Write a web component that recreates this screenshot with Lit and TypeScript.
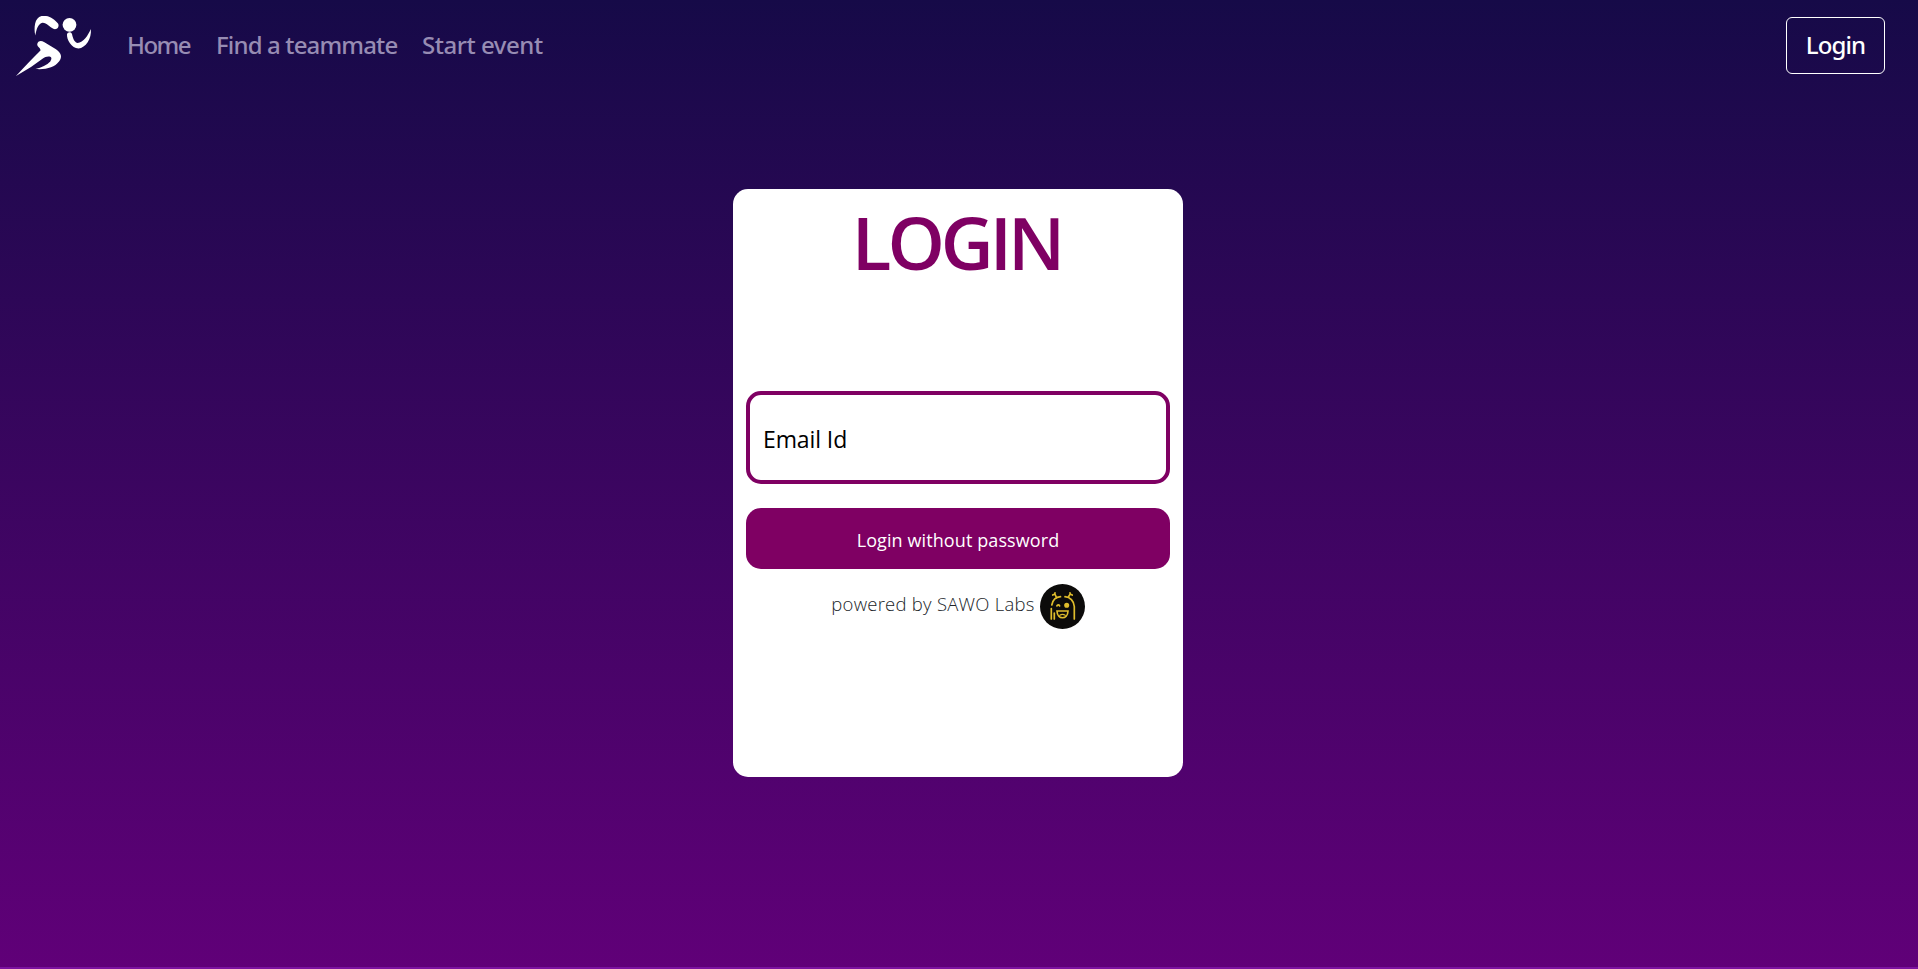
import { LitElement, html, css } from "lit";
import { customElement } from "lit/decorators.js";

@customElement("app-root")
class AppRoot extends LitElement {
  static styles = css`
    :host {
      display: flex;
      flex-direction: column;
      box-sizing: border-box;
      height: 969px;
      overflow: hidden;
      background: linear-gradient(#160a48, #600078 967px);
      border-bottom: 2px solid #7b129f;
      font-family: "Open Sans", sans-serif;
    }
    * { box-sizing: border-box; }
    nav {
      display: flex;
      align-items: center;
      height: 91px;
      padding: 0 33px 0 15px;
      flex: none;
    }
    .logo { display: block; width: 77px; height: 62px; margin-right: 35px; }
    .link {
      color: #978cb3;
      font-family: "Noto Sans", sans-serif;
      font-size: 24px;
      font-weight: 500;
      line-height: 36px;
      white-space: nowrap;
      text-decoration: none;
      padding-bottom: 2px;
    }
    .home { letter-spacing: -1.5px; width: 89px; }
    .find { letter-spacing: -0.85px; width: 206px; }
    .start { letter-spacing: -0.45px; }
    .login {
      margin-left: auto;
      width: 99px;
      height: 57px;
      border: 1px solid #fff;
      border-radius: 6px;
      background: none;
      color: #fff;
      font: 500 24px/36px "Noto Sans", sans-serif;
      letter-spacing: -0.9px;
      padding: 0 0 2px;
    }
    .card {
      display: flex;
      flex-direction: column;
      width: 450px;
      height: 588px;
      margin: 98px 0 0 733px;
      padding: 0 13px;
      border-radius: 15px;
      background: #fff;
      flex: none;
    }
    h1 {
      margin: 7px 0 0;
      height: 195px;
      text-align: center;
      color: #7f0063;
      font-size: 73px;
      line-height: 92px;
      font-weight: 600;
      letter-spacing: -4px;
      text-indent: -3px;
    }
    .email {
      height: 93px;
      border: 4px solid #7f0063;
      border-radius: 15px;
      padding: 3px 13px 0;
      font: 400 23px "Open Sans", sans-serif;
      letter-spacing: -0.1px;
      color: #000;
      background: #fff;
      outline: none;
    }
    .email::placeholder { color: #000; opacity: 1; }
    .submit {
      height: 61px;
      margin-top: 24px;
      padding: 2px 0 0;
      border: 0;
      border-radius: 15px;
      background: #7f0063;
      color: #fff;
      font: 400 18px "Open Sans", sans-serif;
      letter-spacing: 0.1px;
    }
    .powered {
      display: flex;
      justify-content: center;
      align-items: center;
      gap: 5px;
      height: 45px;
      margin-top: 15px;
      font: 300 18.5px/27px "Open Sans", sans-serif;
      letter-spacing: 0.25px;
      color: #212529;
      white-space: nowrap;
    }
    .powered span { padding-bottom: 6px; }
    .bee { display: block; width: 45px; height: 45px; }
  `;

  render() {
    return html`
      <nav>
        <svg class="logo" viewBox="15 15 77 62" fill="#fff">
          <path d="M35.3 35.5C33.7 28 34.5 17.5 41.5 16H46C51 16.5 55 20 58 23.5C60 27 56.5 30.3 53.3 28.8C50 27 46.5 22.5 42.5 22.7C38.2 23.5 36.5 29 35.3 35.5Z"/>
          <circle cx="69.5" cy="24.8" r="6.9"/>
          <path d="M67 34.3C67.5 32 71 31.5 72 34C72.7 37 73.7 41.8 77.5 43C83.5 42.5 88 35.5 90.8 29C92 38.5 85.5 48 78.5 48.6C71.5 48.5 66.5 39.5 67 34.3Z"/>
          <path d="M37.5 43.3C38.5 40.5 41.5 40.4 44 42L56 49.2C61.5 53 62.5 57 59 61.5C54.5 67.5 46 69.8 35.5 69C41.5 67.5 47 65.3 50.3 61.5C52.2 58.5 51.5 57 49.5 56.6C47 56.3 45 57 42.5 58.8L31 67L16 76C24.5 66.5 32.5 58.5 40.5 50.5C40.8 47.5 36 46.5 37.5 43.3Z"/>
        </svg>
        <a class="link home">Home</a>
        <a class="link find">Find a teammate</a>
        <a class="link start">Start event</a>
        <button class="login">Login</button>
      </nav>
      <main class="card">
        <h1>LOGIN</h1>
        <input class="email" placeholder="Email Id" />
        <button class="submit">Login without password</button>
        <div class="powered">
          <span>powered by SAWO Labs</span>
          <svg class="bee" viewBox="0 0 45 45" fill="none" stroke="#dfbd2c" stroke-width="1.7" stroke-linecap="round">
            <circle cx="22.5" cy="22.5" r="22.5" fill="#0c0b0a" stroke="none"/>
            <path d="M11.3 35V24.5M14.3 35V29M34.3 35V22.5C34 17 30 13 25 12.7M11.8 21C12.8 16 16 13 20.5 12.7"/>
            <path d="M16.5 13.5L14.8 10L12.7 11M14.8 10L15 8.8M28.3 13L30.2 10L32.2 11M30.2 10L30 8.8"/>
            <path d="M16.9 21.9C17.4 20.6 19 20.6 19.6 21.9"/>
            <circle cx="26.7" cy="21.2" r="1.7" fill="#dfbd2c"/>
            <path d="M17 27H28C27.7 36 17.3 36 17 27Z"/>
            <path d="M19.8 31.3C21.3 30.3 23.7 30.3 25.2 31.3" stroke-width="1.2"/>
          </svg>
        </div>
      </main>
    `;
  }
}
